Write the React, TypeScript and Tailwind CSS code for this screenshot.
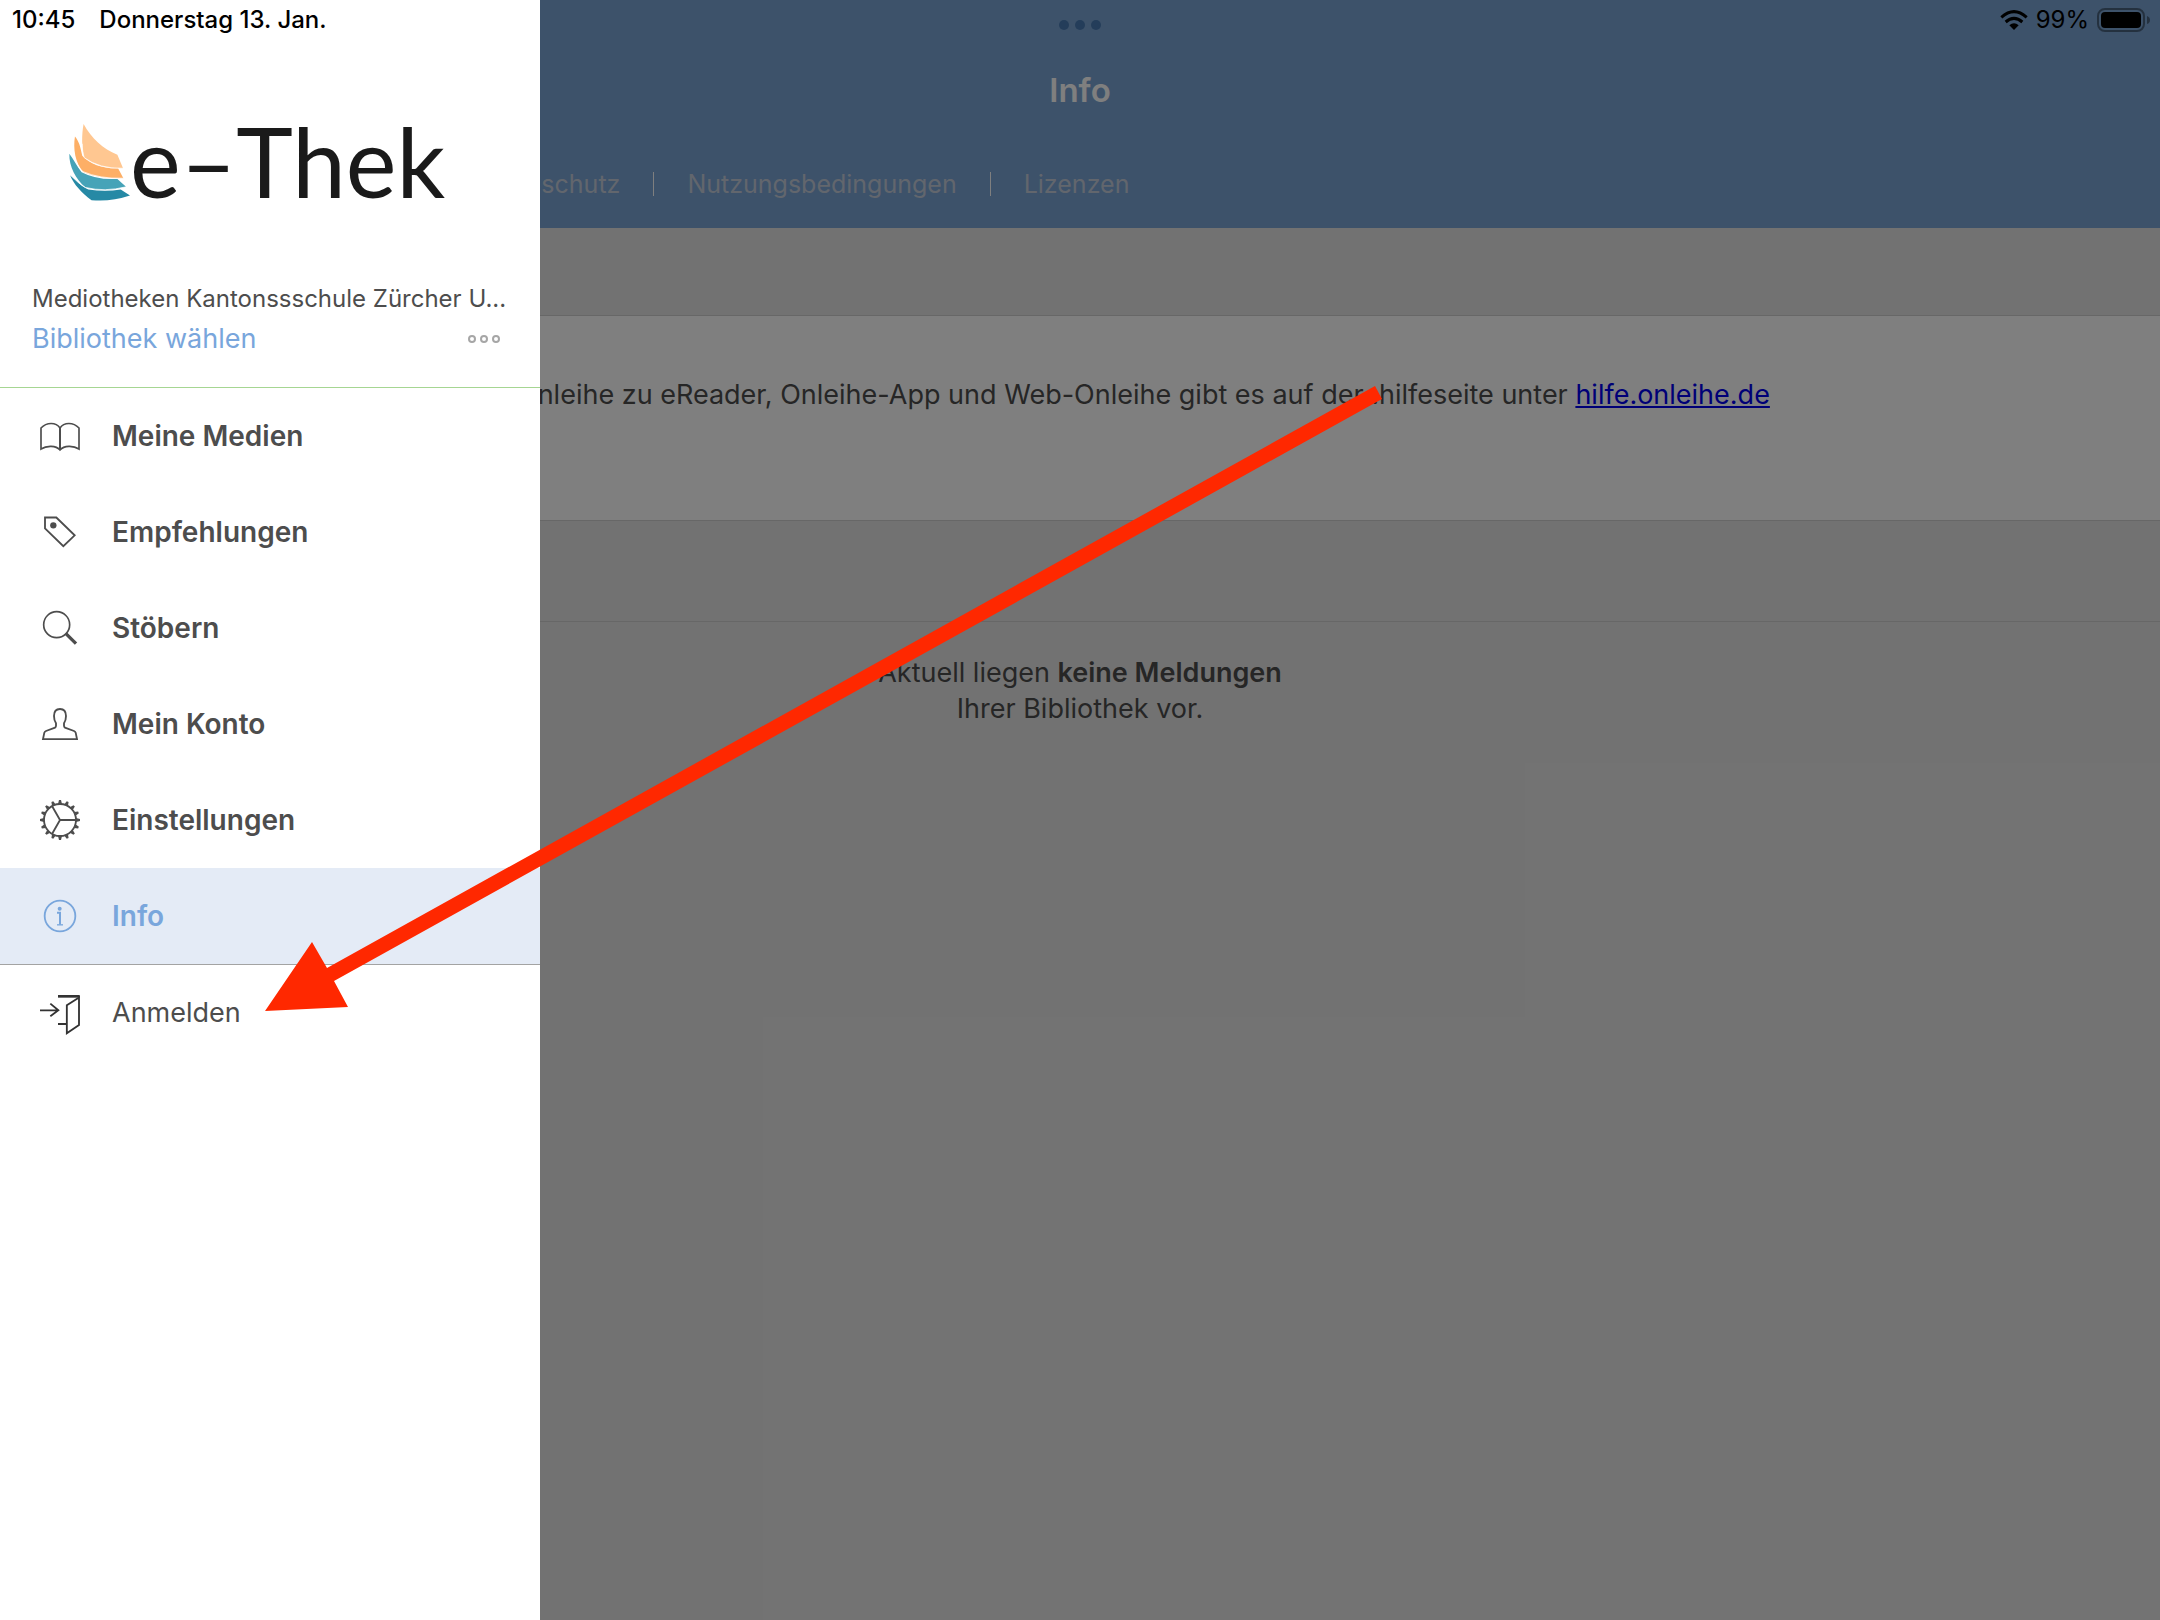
import React from "react";

const iconBase = {
  viewBox: "0 0 120 120",
  fill: "none",
  stroke: "currentColor",
  strokeWidth: 5.5,
  className: "size-10 shrink-0 overflow-visible",
  "aria-hidden": true,
} as const;

function BookIcon() {
  return (
    <svg {...iconBase}>
      <path d="M60 36C48 18 20 18 3 36V99C20 88 48 88 60 102C72 88 100 88 117 99V36C100 18 72 18 60 36Z" strokeWidth={5} />
      <path d="M60 34V102" strokeWidth={6} />
    </svg>
  );
}

function TagIcon() {
  return (
    <svg {...iconBase}>
      <path d="M15 16.500H49L104 70L70 102.500L15 49Z" />
      <circle cx="40" cy="40" r="9.500" fill="currentColor" stroke="none" />
    </svg>
  );
}

function SearchIcon() {
  return (
    <svg {...iconBase}>
      <circle cx="50" cy="50" r="39" strokeWidth={5} />
      <path d="M77 76L108 107" strokeWidth={10} />
    </svg>
  );
}

function PersonIcon() {
  return (
    <svg {...iconBase}>
      <path d="M9 105.500H111L107 86Q106 83 102 81L75 71Q72 69 72 65V58C76 52 78 46 78 36C78 22 71 15 60 15S42 22 42 36C42 46 44 52 48 58V65Q48 69 45 71L18 81Q14 83 13 86Z" />
    </svg>
  );
}

const teeth = Array.from({ length: 16 }, (_, i) => i * 22.5);

function GearIcon() {
  return (
    <svg {...iconBase}>
      <circle cx="60" cy="60" r="48" />
      {teeth.map((angle) => (
        <path key={angle} d="M54 12L57 0H63L66 12Z" fill="currentColor" stroke="none" transform={`rotate(${angle} 60 60)`} />
      ))}
      <path d="M60 60H108M60 60L36 18M60 60L36 102" />
    </svg>
  );
}

function InfoIcon() {
  return (
    <svg {...iconBase}>
      <circle cx="60" cy="60" r="46" />
      <circle cx="59" cy="38" r="6" fill="currentColor" stroke="none" />
      <path d="M51 50.500H60V85.500" strokeWidth={6} />
      <path d="M51 86.500H69" strokeWidth={4} />
    </svg>
  );
}

function LoginIcon() {
  return (
    <svg {...iconBase}>
      <path d="M0 52H55M31 32L55 52L31 70" />
      <path d="M54 10H119" strokeWidth={8} />
      <path d="M117 8V96L80.500 121V37L116 14M54 93H80" />
    </svg>
  );
}

function LogoMark() {
  return (
    <svg viewBox="0 0 184 234" className="h-[78px] w-[61px] shrink-0" aria-hidden="true">
      <path d="M3 156C20 170 34 188 58 200Q110 208 156 200L184 218Q124 238 68 232C38 210 14 184 3 156Z" fill="#2689a5" />
      <path d="M1 92C14 108 22 128 38 148Q84 172 146 168L172 192Q108 210 50 194C20 168 0 130 1 92Z" fill="#46a3b8" />
      <path d="M18 40C30 54 34 70 40 98Q78 138 148 136L164 166Q90 168 44 148C18 120 12 76 18 40Z" fill="#fdaf66" />
      <path d="M44 2C68 46 102 76 146 95L163 136Q92 138 46 104C38 74 38 34 44 2Z" fill="#ffc791" />
      <path d="M40 62C40 80 42 92 46 104Q92 138 163 136M22 118C28 130 34 142 42 146Q92 168 164 166M3 156C20 170 32 186 50 194Q108 208 172 192" fill="none" stroke="#fff" strokeOpacity="0.75" strokeWidth="3" />
    </svg>
  );
}

function WifiIcon() {
  return (
    <svg viewBox="0 0 84 60" className="h-5 w-7" aria-hidden="true">
      <g fill="none" stroke="#000" strokeWidth="9">
        <path d="M4 22Q42 -12 80 22" />
        <path d="M17 36Q42 14 67 36" />
      </g>
      <path d="M28 46Q42 34 56 46L42 60Z" fill="#000" />
    </svg>
  );
}

function BatteryIcon() {
  return (
    <svg viewBox="0 0 54 24" className="h-6 w-[54px]" aria-hidden="true">
      <rect x="1" y="1" width="46" height="22" rx="7" fill="none" stroke="#000" strokeOpacity="0.4" strokeWidth="2" />
      <rect x="4" y="4" width="40" height="16" rx="4" fill="#000" />
      <path d="M50 8Q53 9 53 12T50 16Z" fill="#000" fillOpacity="0.4" />
    </svg>
  );
}

const menu = [
  { label: "Meine Medien", icon: <BookIcon /> },
  { label: "Empfehlungen", icon: <TagIcon /> },
  { label: "Stöbern", icon: <SearchIcon /> },
  { label: "Mein Konto", icon: <PersonIcon /> },
  { label: "Einstellungen", icon: <GearIcon /> },
];

const rowClass = "flex h-24 w-full items-center gap-8 px-10 text-left";

function Drawer() {
  return (
    <aside className="absolute inset-y-0 left-0 w-1/4 bg-white text-[#4d4d4d]">
      <div className="flex h-[388px] flex-col justify-between border-b border-[#a6d692] px-8 pb-7">
        <div className="mt-[123px] flex pl-[37px]">
          <LogoMark />
          <span className="whitespace-nowrap font-[Lato,sans-serif] text-[96px] leading-[76px] text-[#1a1a1a]">e–Thek</span>
        </div>
        <div>
          <p className="whitespace-nowrap text-[24px] leading-10">Mediotheken Kantonssschule Zürcher U...</p>
          <div className="flex items-center justify-between pr-2">
            <a href="#bibliothek" className="text-[27px] leading-10 text-[#79a6dc]">
              Bibliothek wählen
            </a>
            <button type="button" aria-label="Mehr" className="flex gap-1">
              <span className="size-2 rounded-full border-2 border-[#a6a6a6]" />
              <span className="size-2 rounded-full border-2 border-[#a6a6a6]" />
              <span className="size-2 rounded-full border-2 border-[#a6a6a6]" />
            </button>
          </div>
        </div>
      </div>
      <nav>
        {menu.map((item) => (
          <button key={item.label} type="button" className={rowClass}>
            {item.icon}
            <span className="text-[28px] font-semibold">{item.label}</span>
          </button>
        ))}
        <button type="button" aria-current="page" className="flex h-[97px] w-full items-center gap-8 border-b border-[#a3a3a3] bg-[#e4ebf6] px-10 text-left text-[#79a6dc]">
          <InfoIcon />
          <span className="text-[28px] font-semibold">Info</span>
        </button>
        <button type="button" className={rowClass}>
          <span className="text-[#333]">
            <LoginIcon />
          </span>
          <span className="text-[27px]">Anmelden</span>
        </button>
      </nav>
    </aside>
  );
}

export default function App() {
  return (
    <div className="relative min-h-screen overflow-hidden bg-[#e5e5e5] font-[Inter,sans-serif] text-[#4d4d4d]">
      <header className="flex h-[228px] flex-col bg-[#7aa4d4] pt-5">
        <div className="flex justify-center gap-1.5 pb-5">
          <span className="size-2.5 rounded-full bg-[#487ab4]" />
          <span className="size-2.5 rounded-full bg-[#487ab4]" />
          <span className="size-2.5 rounded-full bg-[#487ab4]" />
        </div>
        <h1 className="pt-5 text-center text-[33px] leading-10 font-semibold text-white">Info</h1>
        <nav className="flex items-center gap-[33px] pt-[54px] pl-[472px] text-[25px] leading-10 text-[#c4cddb]">
          <a href="#datenschutz">Datenschutz</a>
          <span className="h-6 w-px bg-white" />
          <a href="#nutzungsbedingungen">Nutzungsbedingungen</a>
          <span className="h-6 w-px bg-white" />
          <a href="#lizenzen">Lizenzen</a>
        </nav>
      </header>
      <main>
        <section className="mt-[87px] h-[206px] border-y border-[#cfcfcf] bg-white pt-[59px] pl-[517px]">
          <p className="text-[27px] leading-10 whitespace-nowrap">
            Onleihe zu eReader, Onleihe-App und Web-Onleihe gibt es auf der :hilfeseite unter{" "}
            <a href="#hilfe" className="text-[#0000ee] underline">
              hilfe.onleihe.de
            </a>
          </p>
        </section>
        <section className="mt-[100px] border-t border-[#cfcfcf] pt-[33px]">
          <p className="text-center text-[27px] leading-9">
            Aktuell liegen <strong className="font-semibold">keine Meldungen</strong>
            <br />
            Ihrer Bibliothek vor.
          </p>
        </section>
      </main>
      <div className="absolute inset-0 bg-black/50" />
      <Drawer />
      <div className="absolute inset-x-0 top-0 flex h-10 items-center justify-between pr-[9px] pl-3 text-[24px] font-medium text-black">
        <div className="flex gap-6">
          <time>10:45</time>
          <span>Donnerstag 13. Jan.</span>
        </div>
        <div className="flex items-center gap-2">
          <WifiIcon />
          <span className="font-normal">99%</span>
          <BatteryIcon />
        </div>
      </div>
      <svg viewBox="265 385 1118 627" className="pointer-events-none absolute top-[385px] left-[265px] h-[627px] w-[1118px]" aria-hidden="true">
        <path d="M265 1011L312 942L327 968L1375 386L1382 399L334 981L348 1007Z" fill="#ff2800" />
      </svg>
    </div>
  );
}
